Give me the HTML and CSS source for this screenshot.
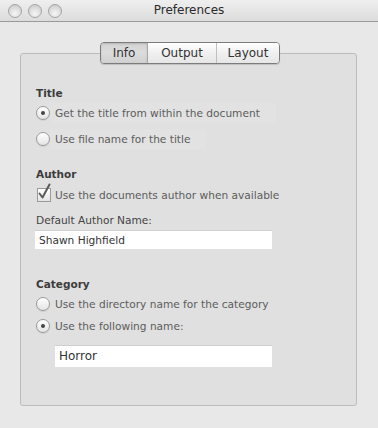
FILE: index.html
```html
<!DOCTYPE html>
<html>
<head>
  <title>Preferences</title>
  <link rel="stylesheet" href="styles.css">
</head>
<body>
  <div class="window">
    <div class="titlebar">
      <div class="lights">
        <span class="light"></span>
        <span class="light"></span>
        <span class="light"></span>
      </div>
      <div class="title">Preferences</div>
    </div>

    <div class="content">
      <div class="tabs">
        <div class="tab tab-info selected">Info</div>
        <div class="tab tab-output">Output</div>
        <div class="tab tab-layout">Layout</div>
      </div>

      <div class="group">
        <div class="heading h-title">Title</div>
        <div class="option opt-1"><span class="radio on"></span><span class="label band">Get the title from within the document</span></div>
        <div class="option opt-2"><span class="radio"></span><span class="label band">Use file name for the title</span></div>

        <div class="heading h-author">Author</div>
        <div class="option opt-check">
          <span class="check">
            <svg width="16" height="18" viewBox="0 0 16 18"><path d="M3.5 10.5 L6.5 14.5 L13.5 1.5" fill="none" stroke="#5a5a5a" stroke-width="2" stroke-linecap="round" stroke-linejoin="round"/></svg>
          </span>
          <span class="label">Use the documents author when available</span>
        </div>
        <div class="field-label">Default Author Name:</div>
        <div class="textfield author-field">Shawn Highfield</div>

        <div class="heading h-category">Category</div>
        <div class="option opt-3"><span class="radio"></span><span class="label">Use the directory name for the category</span></div>
        <div class="option opt-4"><span class="radio on"></span><span class="label">Use the following name:</span></div>
        <div class="textfield category-field">Horror</div>
      </div>
    </div>
  </div>
</body>
</html>
```

FILE: styles.css
```css
body {
  margin: 0;
  background: #e8e8e8;
  font-family: "DejaVu Sans", sans-serif;
}
.window {
  width: 378px;
  height: 428px;
  background: #e8e8e8;
  overflow: hidden;
}
.titlebar {
  height: 21px;
  border-bottom: 1px solid #9a9a9a;
  background: linear-gradient(#efefef, #dcdcdc);
  display: flex;
  align-items: center;
  position: relative;
}
.lights {
  display: flex;
  gap: 6px;
  padding-left: 8px;
}
.light {
  width: 14px;
  height: 14px;
  border-radius: 50%;
  box-sizing: border-box;
  border: 1px solid #a4a4a4;
  background: radial-gradient(circle at 50% 72%, #f6f6f6 0%, #dcdcdc 55%, #c2c2c2 100%);
}
.title {
  position: absolute;
  left: 0;
  right: 0;
  text-align: center;
  font-size: 12px;
  color: #2a2a2a;
  top: 3px;
}
.content {
  padding-top: 20px;
}
.tabs {
  display: flex;
  margin-left: 100px;
  width: 180px;
  height: 22px;
  box-sizing: border-box;
  border: 1px solid #7c7c7c;
  border-radius: 4px;
  overflow: hidden;
  position: relative;
  z-index: 1;
  box-shadow: 0 1px 1px rgba(0,0,0,0.15);
}
.tab {
  font-size: 12px;
  color: #333;
  line-height: 20px;
  text-align: center;
  background: linear-gradient(#ffffff, #f0f0f0 50%, #e6e6e6);
}
.tab-info { width: 46px; border-right: 1px solid #a8a8a8; }
.tab-output { width: 68px; border-right: 1px solid #c0c0c0; }
.tab-layout { flex: 1; }
.tab.selected {
  background: linear-gradient(#d4d4d4, #dcdcdc 50%, #d0d0d0);
  box-shadow: inset 0 1px 2px rgba(0,0,0,0.15);
}
.group {
  margin: -11px 21px 0 20px;
  height: 353px;
  box-sizing: border-box;
  border: 1px solid #bcbcbc;
  border-radius: 3px;
  background: #e0e0e0;
  padding: 31px 0 0 14px;
  display: flex;
  flex-direction: column;
  align-items: flex-start;
}
.heading {
  font-size: 10.5px;
  font-weight: bold;
  color: #3c3c3c;
  height: 16px;
  line-height: 16px;
  padding-left: 1px;
}
.option {
  height: 20px;
  display: flex;
  align-items: center;
  font-size: 10.6px;
  color: #5c5c5c;
}
.label {
  padding-left: 5px;
  padding-right: 16px;
  line-height: 20px;
}
.band {
  background: #e2e2e2;
}
.radio {
  width: 14px;
  height: 14px;
  margin-left: 1px;
  border-radius: 50%;
  box-sizing: border-box;
  border: 1px solid #9a9a9a;
  background: linear-gradient(#ffffff, #e4e4e4);
  box-shadow: 0 1px 1px rgba(0,0,0,0.08);
  display: flex;
  align-items: center;
  justify-content: center;
}
.radio.on::after {
  content: "";
  width: 4px;
  height: 4px;
  border-radius: 50%;
  background: #444;
}
.check {
  width: 14px;
  height: 14px;
  margin-left: 2px;
  box-sizing: border-box;
  border: 1px solid #9a9a9a;
  background: linear-gradient(#ffffff, #e4e4e4);
  position: relative;
}
.check svg {
  position: absolute;
  left: -2px;
  top: -6px;
}
.opt-check .label { padding-left: 4px; }
.h-title { margin-top: 0; }
.opt-1 { margin-top: 2px; }
.opt-2 { margin-top: 6px; }
.h-author { margin-top: 17px; }
.opt-check { margin-top: 3px; }
.field-label {
  font-size: 10.6px;
  color: #444;
  height: 16px;
  line-height: 16px;
  margin-top: 7px;
  padding-left: 1px;
}
.textfield {
  background: #fff;
  box-sizing: border-box;
  border-top: 1px solid #d0d0d0;
  color: #333;
}
.author-field {
  margin-top: 2px;
  width: 237px;
  height: 19px;
  font-size: 10.6px;
  line-height: 18px;
  padding-left: 4px;
}
.h-category { margin-top: 27px; }
.opt-3 { margin-top: 2px; }
.opt-4 { margin-top: 2px; }
.category-field {
  margin-top: 9px;
  margin-left: 20px;
  width: 217px;
  height: 22px;
  font-size: 12px;
  line-height: 21px;
  padding-left: 4px;
}
```
